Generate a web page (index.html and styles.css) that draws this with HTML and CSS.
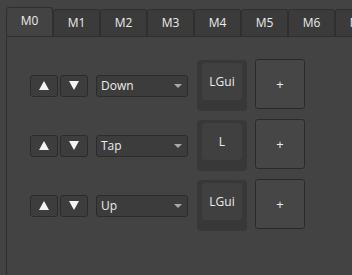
FILE: index.html
```html
<!DOCTYPE html>
<html lang="en">
<head>
    <meta charset="UTF-8"/>
    <title>Macro Editor</title>
    <link rel="stylesheet" href="styles.css">
</head>
<body>
<!-- ========== TAB BAR ========== -->
<div class="tabs">
    <div class="tab active">M0</div>
    <div class="tab">M1</div>
    <div class="tab">M2</div>
    <div class="tab">M3</div>
    <div class="tab">M4</div>
    <div class="tab">M5</div>
    <div class="tab">M6</div>
    <div class="tab">M7</div>
</div>

<!-- ========== MACRO STEPS ========== -->
<div class="pane">
    <div class="step">
        <div class="move-btns">
            <button class="move-btn"><span class="tri up"></span></button>
            <button class="move-btn"><span class="tri down"></span></button>
        </div>
        <div class="combo">Down<span class="combo-arrow"></span></div>
        <div class="keycap"><div class="keycap-top">LGui</div></div>
        <button class="add-btn">+</button>
    </div>
    <div class="step">
        <div class="move-btns">
            <button class="move-btn"><span class="tri up"></span></button>
            <button class="move-btn"><span class="tri down"></span></button>
        </div>
        <div class="combo">Tap<span class="combo-arrow"></span></div>
        <div class="keycap"><div class="keycap-top">L</div></div>
        <button class="add-btn">+</button>
    </div>
    <div class="step">
        <div class="move-btns">
            <button class="move-btn"><span class="tri up"></span></button>
            <button class="move-btn"><span class="tri down"></span></button>
        </div>
        <div class="combo">Up<span class="combo-arrow"></span></div>
        <div class="keycap"><div class="keycap-top">LGui</div></div>
        <button class="add-btn">+</button>
    </div>
</div>
</body>
</html>
```

FILE: styles.css
```css
/* ========== GLOBAL ========== */
body {
  margin: 0;
  height: 275px;
  background-color: #434343;
  color: #ececec;
  font-family: "Open Sans", "Noto Sans", sans-serif;
  font-size: 12px;
  overflow: hidden;
}

button {
  font-family: inherit;
  color: inherit;
  padding: 0;
  cursor: pointer;
}

/* ========== TABS ========== */
.tabs {
  display: flex;
  align-items: flex-end;
  padding: 7px 0 0 6px;
  white-space: nowrap;
  overflow: hidden;
}

.tab {
  flex: 0 0 47px;
  box-sizing: border-box;
  height: 27px;
  line-height: 25px;
  text-align: center;
  background-color: #3b3b3b;
  border: 1px solid #2f2f2f;
  border-bottom: none;
  border-radius: 3px 3px 0 0;
}

.tab.active {
  height: 30px;
  line-height: 26px;
  background-color: #434343;
  margin-bottom: -1px;
  position: relative;
  z-index: 1;
}

/* ========== PANE ========== */
.pane {
  box-sizing: border-box;
  margin-left: 6px;
  height: 241px;
  border-left: 1px solid #2f2f2f;
  border-top: 1px solid #2f2f2f;
  padding: 23px 0 0 23px;
  display: flex;
  flex-direction: column;
  gap: 9px;
}

.step {
  display: flex;
  align-items: center;
  height: 51px;
}

.move-btns {
  display: flex;
  gap: 2px;
  margin-right: 8px;
}

.move-btn {
  width: 28px;
  height: 22px;
  background-color: #3d3d3d;
  border: 1px solid #2b2b2b;
  border-radius: 3px;
  display: flex;
  align-items: center;
  justify-content: center;
}

.tri {
  width: 0;
  height: 0;
  border-left: 5px solid transparent;
  border-right: 5px solid transparent;
}
.tri.up {
  border-bottom: 9px solid #f4f4f4;
}
.tri.down {
  border-top: 9px solid #f4f4f4;
}

.combo {
  position: relative;
  box-sizing: border-box;
  width: 92px;
  height: 22px;
  line-height: 20px;
  padding-left: 4px;
  margin-right: 9px;
  background-color: #3c3c3c;
  border: 1px solid #2b2b2b;
  border-radius: 3px;
}

.combo-arrow {
  position: absolute;
  right: 5px;
  top: 8px;
  width: 0;
  height: 0;
  border-left: 4px solid transparent;
  border-right: 4px solid transparent;
  border-top: 4px solid #a8a8a8;
}

/* ========== KEYCAP ========== */
.keycap {
  box-sizing: border-box;
  width: 50px;
  height: 51px;
  padding: 3px 5px 11px 5px;
  background-color: #383838;
  border-radius: 4px;
  margin-right: 8px;
}

.keycap-top {
  height: 100%;
  background-color: #404040;
  border-radius: 4px;
  display: flex;
  align-items: center;
  justify-content: center;
}

.add-btn {
  width: 50px;
  height: 50px;
  margin-top: -3px;
  background-color: #464646;
  border: 1px solid #2a2a2a;
  border-radius: 3px;
  font-size: 13px;
}
```
